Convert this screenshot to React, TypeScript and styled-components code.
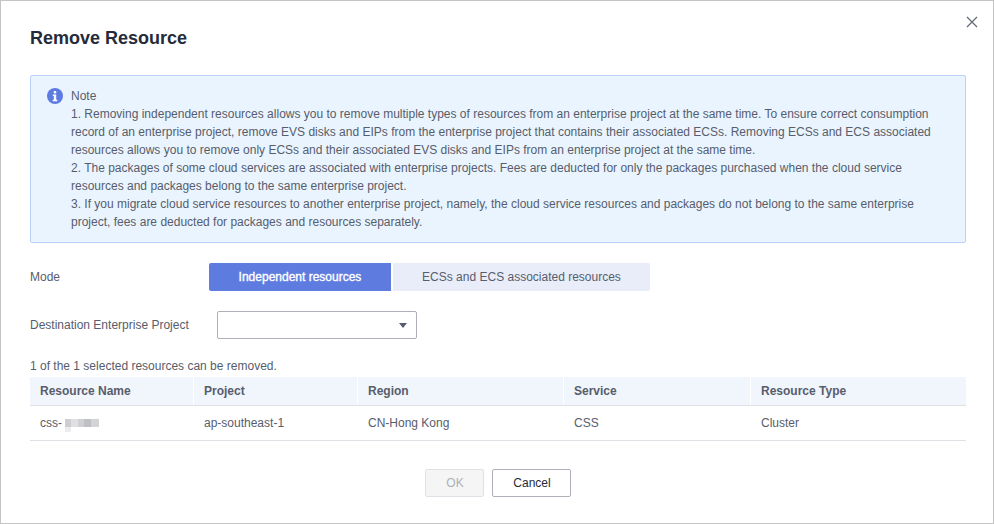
import React from 'react';
import styled, { createGlobalStyle } from 'styled-components';

const GlobalStyle = createGlobalStyle`
  html, body {
    margin: 0;
    padding: 0;
    background: #fff;
  }
  * {
    box-sizing: border-box;
  }
`;

const Dialog = styled.div`
  position: relative;
  width: 994px;
  height: 524px;
  background: #fff;
  border: 1px solid #c4c4c4;
  padding: 0 27px 0 29px;
  font-family: 'Liberation Sans', Arial, sans-serif;
  font-size: 12px;
  color: #575d6c;
`;

const Title = styled.h2`
  margin: 0;
  padding-top: 26px;
  height: 74px;
  font-size: 18px;
  line-height: 22px;
  font-weight: 700;
  color: #252b3a;
`;

const CloseButton = styled.button`
  position: absolute;
  top: 15px;
  right: 15px;
  width: 12px;
  height: 12px;
  padding: 0;
  border: 0;
  background: none;
  display: flex;
  svg {
    display: block;
  }
`;

const Note = styled.div`
  display: flex;
  height: 168px;
  padding: 11px 16px 0 16px;
  gap: 8px;
  background: #eaf4fe;
  border: 1px solid #bcd0fa;
  border-radius: 2px;
  line-height: 18px;
`;

const NoteIcon = styled.svg`
  flex: none;
  width: 16px;
  height: 16px;
  margin-top: 1px;
`;

const NoteText = styled.div`
  flex: 1;
  p {
    margin: 0;
  }
`;

const Row = styled.div`
  display: flex;
  align-items: center;
`;

const ModeRow = styled(Row)`
  margin-top: 20px;
  height: 28px;
`;

const ProjectRow = styled(Row)`
  margin-top: 20px;
  height: 28px;
`;

const ModeLabel = styled.label`
  width: 179px;
`;

const ProjectLabel = styled.label`
  width: 187px;
`;

const ModeTab = styled.div<{ $active?: boolean }>`
  height: 28px;
  line-height: 28px;
  text-align: center;
  width: ${(p) => (p.$active ? '182px' : '257px')};
  margin-right: ${(p) => (p.$active ? '2px' : '0')};
  color: ${(p) => (p.$active ? '#fff' : '#575d6c')};
  -webkit-text-stroke: ${(p) => (p.$active ? '0.35px #fff' : '0')};
  background: ${(p) => (p.$active ? '#5e7ce0' : '#e9edfa')};
  border-radius: ${(p) => (p.$active ? '2px 0 0 2px' : '0 2px 2px 0')};
`;

const Select = styled.div`
  width: 200px;
  height: 28px;
  border: 1px solid #adb0b8;
  border-radius: 2px;
  display: flex;
  align-items: center;
  justify-content: flex-end;
  padding-right: 9px;
`;

const Caret = styled.span`
  width: 0;
  height: 0;
  margin-top: 1px;
  border-left: 4px solid transparent;
  border-right: 4px solid transparent;
  border-top: 5px solid #575d6c;
`;

const Summary = styled.div`
  margin-top: 18px;
  height: 20px;
  line-height: 18px;
`;

const Table = styled.div`
  width: 936px;
`;

const columns = '163px 164px 206px 187px 216px';

const HeaderRow = styled.div`
  display: grid;
  grid-template-columns: ${columns};
  height: 29px;
  background: #f1f5fc;
  border-bottom: 1px solid #dfe1e6;
`;

const HeaderCell = styled.div`
  padding-left: 10px;
  line-height: 28px;
  font-weight: 700;
  color: #575d6c;
  border-left: 1px solid #fff;
  &:first-child {
    border-left: 0;
  }
`;

const BodyRow = styled.div`
  display: grid;
  grid-template-columns: ${columns};
  height: 35px;
  border-bottom: 1px solid #dfe1e6;
`;

const BodyCell = styled.div`
  padding-left: 10px;
  line-height: 34px;
  color: #575d6c;
  &:not(:first-child) {
    padding-left: 11px;
  }
`;

const Masked = styled.span`
  position: relative;
  display: inline-flex;
  margin-left: 3px;
  height: 8px;
  &::after {
    content: '';
    position: absolute;
    left: 0;
    top: 8px;
    width: 6px;
    height: 5px;
    background: #ececee;
  }
`;

const MaskBlock = styled.i<{ $w: number; $c: string }>`
  display: block;
  width: ${(p) => p.$w}px;
  height: 100%;
  background: ${(p) => p.$c};
`;

const Footer = styled.div`
  display: flex;
  justify-content: center;
  gap: 8px;
  margin-top: 28px;
`;

const Button = styled.button<{ $disabled?: boolean }>`
  height: 28px;
  padding: 0 0 0 1px;
  width: ${(p) => (p.$disabled ? '59px' : '79px')};
  font-family: inherit;
  font-size: 12px;
  background: ${(p) => (p.$disabled ? '#f5f5f6' : '#fff')};
  color: ${(p) => (p.$disabled ? '#adb0b8' : '#252b3a')};
  border: 1px solid ${(p) => (p.$disabled ? '#dfe1e6' : '#adb0b8')};
  border-radius: 2px;
`;

const maskBlocks = [
  { w: 6, c: '#cdced1' },
  { w: 7, c: '#e0e0e2' },
  { w: 6, c: '#cfd0d2' },
  { w: 7, c: '#bfc0c4' },
  { w: 8, c: '#d3d4d6' },
];

const headers = ['Resource Name', 'Project', 'Region', 'Service', 'Resource Type'];

const App = () => {
  return (
    <>
      <GlobalStyle />
      <Dialog>
        <Title>Remove Resource</Title>
        <CloseButton aria-label="Close">
          <svg width="12" height="12" viewBox="0 0 12 12">
            <path d="M1 1l10 10M11 1L1 11" stroke="#666c7a" strokeWidth="1.3" fill="none" />
          </svg>
        </CloseButton>
        <Note>
          <NoteIcon viewBox="0 0 16 16">
            <circle cx="8" cy="8" r="8" fill="#5e7ce0" />
            <rect x="6.8" y="3" width="2.4" height="2.4" fill="#fff" />
            <path d="M5.8 6.5h3.4v5.3h1.1v1.4H5.7v-1.4h1.1V7.9h-1z" fill="#fff" />
          </NoteIcon>
          <NoteText>
            <p>Note</p>
            <p>
              1. Removing independent resources allows you to remove multiple types of resources from an enterprise project at the same time. To ensure correct consumption record of an enterprise project, remove EVS disks and EIPs from the enterprise project that contains their associated ECSs. Removing ECSs and ECS associated resources allows you to remove only ECSs and their associated EVS disks and EIPs from an enterprise project at the same time.
            </p>
            <p>
              2. The packages of some cloud services are associated with enterprise projects. Fees are deducted for only the packages purchased when the cloud service resources and packages belong to the same enterprise project.
            </p>
            <p>
              3. If you migrate cloud service resources to another enterprise project, namely, the cloud service resources and packages do not belong to the same enterprise project, fees are deducted for packages and resources separately.
            </p>
          </NoteText>
        </Note>
        <ModeRow>
          <ModeLabel>Mode</ModeLabel>
          <ModeTab $active>Independent resources</ModeTab>
          <ModeTab>ECSs and ECS associated resources</ModeTab>
        </ModeRow>
        <ProjectRow>
          <ProjectLabel>Destination Enterprise Project</ProjectLabel>
          <Select>
            <Caret />
          </Select>
        </ProjectRow>
        <Summary>1 of the 1 selected resources can be removed.</Summary>
        <Table>
          <HeaderRow>
            {headers.map((h) => (
              <HeaderCell key={h}>{h}</HeaderCell>
            ))}
          </HeaderRow>
          <BodyRow>
            <BodyCell>
              css-
              <Masked>
                {maskBlocks.map((b, i) => (
                  <MaskBlock key={i} $w={b.w} $c={b.c} />
                ))}
              </Masked>
            </BodyCell>
            <BodyCell>ap-southeast-1</BodyCell>
            <BodyCell>CN-Hong Kong</BodyCell>
            <BodyCell>CSS</BodyCell>
            <BodyCell>Cluster</BodyCell>
          </BodyRow>
        </Table>
        <Footer>
          <Button $disabled disabled>
            OK
          </Button>
          <Button>Cancel</Button>
        </Footer>
      </Dialog>
    </>
  );
};

export default App;
